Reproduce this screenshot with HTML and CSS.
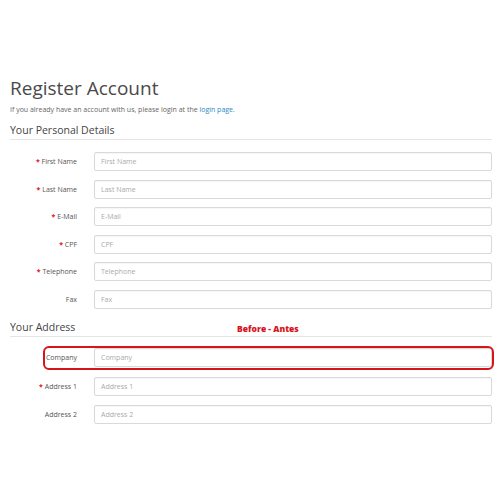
FILE: index.html
```html
<!DOCTYPE html>
<html>
<head>
<meta charset="utf-8">
<link rel="stylesheet" href="styles.css">
</head>
<body>
<div class="page">
  <h1 class="title">Register Account</h1>
  <p class="intro">If you already have an account with us, please login at the <a href="#" class="link">login page</a>.</p>
  <div class="section personal">
    <h2 class="legend">Your Personal Details</h2>
    <div class="rows">
      <div class="row"><label class="label req">First Name</label><input class="field" placeholder="First Name"></div>
      <div class="row"><label class="label req">Last Name</label><input class="field" placeholder="Last Name"></div>
      <div class="row"><label class="label req">E-Mail</label><input class="field" placeholder="E-Mail"></div>
      <div class="row"><label class="label req">CPF</label><input class="field" placeholder="CPF"></div>
      <div class="row"><label class="label req">Telephone</label><input class="field" placeholder="Telephone"></div>
      <div class="row"><label class="label">Fax</label><input class="field" placeholder="Fax"></div>
    </div>
  </div>
  <div class="section address">
    <h2 class="legend">Your Address</h2>
    <span class="note">Before - Antes</span>
    <div class="rows">
      <div class="row highlight"><label class="label">Company</label><input class="field" placeholder="Company"></div>
      <div class="row"><label class="label req">Address 1</label><input class="field" placeholder="Address 1"></div>
      <div class="row"><label class="label">Address 2</label><input class="field" placeholder="Address 2"></div>
    </div>
  </div>
</div>
</body>
</html>
```

FILE: styles.css
```css
html, body {
  margin: 0;
  padding: 0;
  background: #fff;
}
body {
  font-family: "Open Sans", "Liberation Sans", sans-serif;
  color: #555;
}
.page {
  width: 482px;
  padding: 75px 0 0 10px;
}
.title {
  margin: 0;
  font-size: 19px;
  font-weight: 400;
  line-height: 26px;
  color: #4a4a4a;
}
.intro {
  margin: 4px 0 0;
  font-size: 7px;
  line-height: 10px;
  color: #666;
}
.link {
  color: #2a8bc4;
  text-decoration: none;
}
.section {
  position: relative;
}
.legend {
  margin: 0;
  padding: 0 0 2px;
  font-size: 10.5px;
  font-weight: 400;
  line-height: 14px;
  color: #444;
  border-bottom: 1px solid #e5e5e5;
}
.personal {
  margin-top: 8px;
}
.address {
  margin-top: 11px;
}
.rows {
  display: flex;
  flex-direction: column;
  gap: 8.6px;
  padding-top: 12px;
}
.address .rows {
  padding-top: 11.5px;
  gap: 9.5px;
}
.row {
  position: relative;
  display: grid;
  grid-template-columns: 84px 1fr;
  align-items: center;
  height: 19px;
}
.label {
  text-align: right;
  padding-right: 17px;
  font-size: 7px;
  color: #555;
}
.req::before {
  content: "* ";
  color: #e0101a;
  font-weight: 700;
}
.field {
  box-sizing: border-box;
  height: 19px;
  width: 100%;
  margin: 0;
  padding: 0 6px;
  border: 1px solid #d9d9d9;
  border-radius: 2px;
  font-family: "Open Sans", "Liberation Sans", sans-serif;
  font-size: 7px;
  color: #555;
  background: #fff;
  box-shadow: inset 0 1px 1px rgba(0,0,0,0.04);
}
.field::placeholder {
  color: #aaa;
}
.highlight::after {
  content: "";
  position: absolute;
  left: 33px;
  right: -2px;
  top: -2px;
  bottom: -3px;
  border: 2px solid #d7141c;
  border-radius: 6px;
  pointer-events: none;
}
.note {
  position: absolute;
  left: 227px;
  top: 4px;
  font-family: "Open Sans", "Liberation Sans", sans-serif;
  font-size: 8.5px;
  font-weight: 800;
  color: #d7141c;
  line-height: 10px;
  white-space: nowrap;
}
```
